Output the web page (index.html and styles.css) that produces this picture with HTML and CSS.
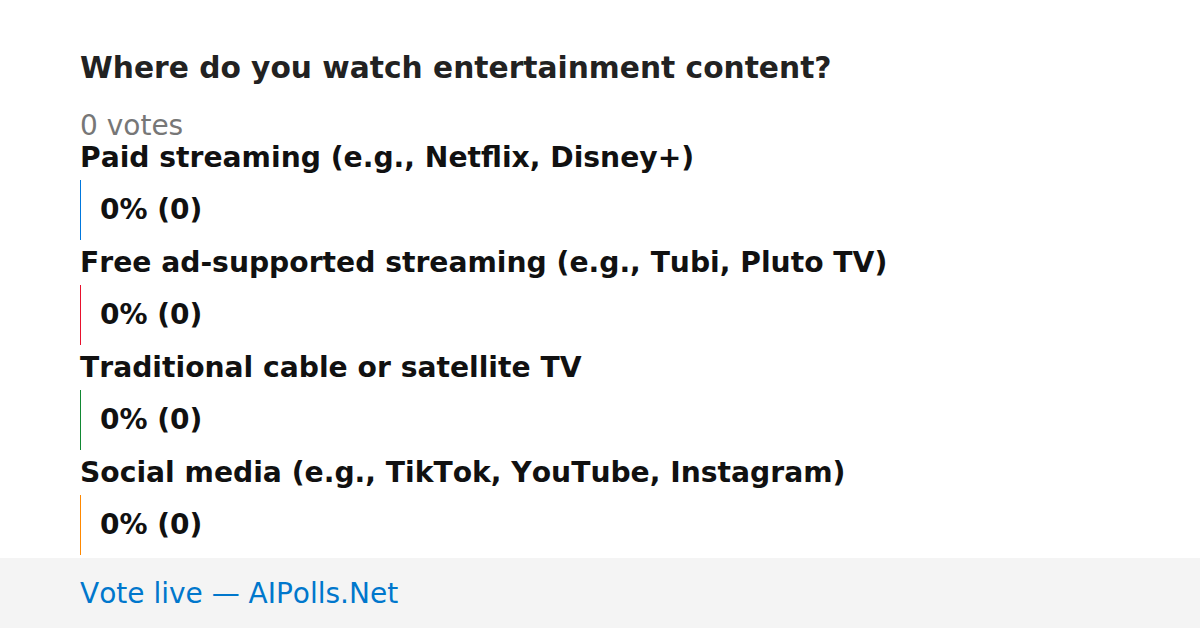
FILE: index.html
```html
<!DOCTYPE html>
<html lang="en">
<head>
    <meta charset="UTF-8">
    <meta name="viewport" content="width=device-width, initial-scale=1.0">
    <title>Poll</title>
    <link rel="stylesheet" href="styles.css">
</head>
<body>
    <div class="poll">
        <h1 class="question">Where do you watch entertainment content?</h1>
        <div class="votes">0 votes</div>

        <div class="option">
            <div class="label">Paid streaming (e.g., Netflix, Disney+)</div>
            <div class="bar blue"><span class="result">0% (0)</span></div>
        </div>
        <div class="option">
            <div class="label">Free ad-supported streaming (e.g., Tubi, Pluto TV)</div>
            <div class="bar red"><span class="result">0% (0)</span></div>
        </div>
        <div class="option">
            <div class="label">Traditional cable or satellite TV</div>
            <div class="bar green"><span class="result">0% (0)</span></div>
        </div>
        <div class="option">
            <div class="label">Social media (e.g., TikTok, YouTube, Instagram)</div>
            <div class="bar orange"><span class="result">0% (0)</span></div>
        </div>
    </div>
    <div class="footer">Vote live — AIPolls.Net</div>
</body>
</html>
```

FILE: styles.css
```css
body {
    margin: 0;
    width: 1200px;
    height: 628px;
    overflow: hidden;
    background-color: #fff;
    font-family: "DejaVu Sans", sans-serif;
    font-kerning: none;
    display: flex;
    flex-direction: column;
}

.poll {
    flex: 1;
    min-height: 0;
    padding: 50px 80px 0 80px;
}

.question {
    margin: 0 0 25px 0;
    font-size: 29.7px;
    line-height: 35px;
    font-weight: bold;
    color: #222;
}

.votes {
    font-size: 28px;
    line-height: 32px;
    color: #777;
}

.option {
    margin-bottom: 7px;
}

.option:last-child {
    margin-bottom: 0;
}

.label {
    font-size: 28.2px;
    line-height: 32px;
    font-weight: bold;
    color: #111;
    margin-bottom: 6px;
}

.bar {
    height: 60px;
    border-left: 1px solid;
    padding-left: 19px;
    display: flex;
    align-items: center;
}

.bar.blue { border-color: #0077dd; }
.bar.red { border-color: #e8112d; }
.bar.green { border-color: #118833; }
.bar.orange { border-color: #ff8800; }

.result {
    font-size: 28px;
    line-height: 32px;
    font-weight: bold;
    color: #111;
}

.footer {
    flex-shrink: 0;
    height: 70px;
    background-color: #f4f4f4;
    padding-left: 80px;
    display: flex;
    align-items: center;
    font-size: 28px;
    color: #0077cc;
}
```
